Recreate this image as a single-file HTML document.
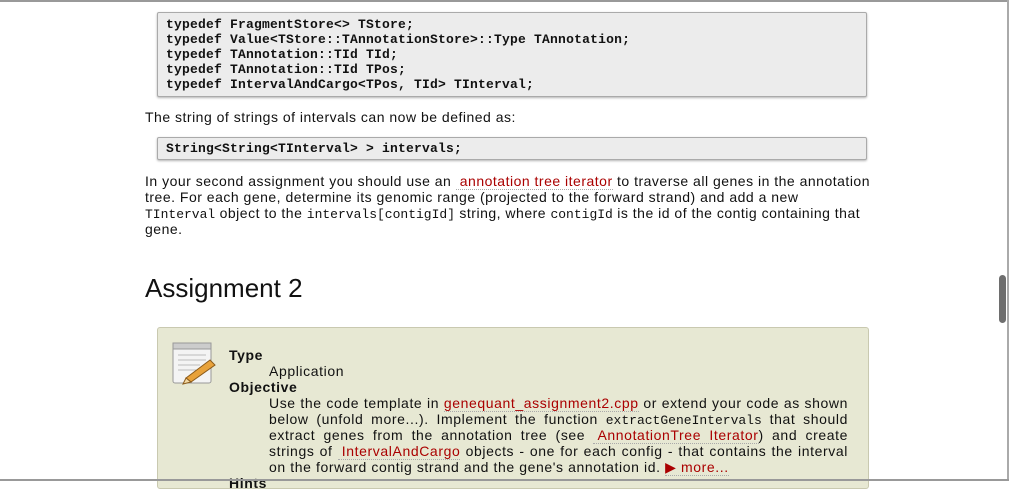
<!DOCTYPE html>
<html><head><style>
body{margin:0;width:1009px;height:481px;overflow:hidden;background:#fff;position:relative;font-family:"Liberation Sans",sans-serif;color:#111;}
.pre{position:absolute;left:157px;width:700px;background:#ececec;border:1px solid #aaa;border-radius:2px;box-shadow:0 1px 2px rgba(0,0,0,.3);padding:4px 0 4px 8px;font:bold 13px/15px "Liberation Mono",monospace;letter-spacing:0.2px;white-space:pre;}
.p{position:absolute;left:145px;width:740px;font-size:14px;letter-spacing:0.5px;line-height:16px;}
a{color:#a00;text-decoration:none;border-bottom:1px dotted #aaa;padding-left:4px}
code{font-family:"Liberation Mono",monospace;font-size:13px;letter-spacing:0;line-height:0}
h2{position:absolute;left:145px;top:273px;margin:0;font-weight:normal;font-size:26px;}
.box{position:absolute;left:157px;top:327px;width:710px;height:160px;background:#e7e8d3;border:1px solid #c9c9b0;border-radius:3px;}
.t{position:absolute;font-size:14px;letter-spacing:0.6px;line-height:16px}
</style></head><body>
<div style="position:absolute;left:0;top:0;width:1009px;height:2px;background:#999"></div>
<div style="position:absolute;right:0;top:0;width:2px;height:481px;background:#aaa"></div>
<div class="pre" style="top:12px">typedef FragmentStore&lt;&gt; TStore;
typedef Value&lt;TStore::TAnnotationStore&gt;::Type TAnnotation;
typedef TAnnotation::TId TId;
typedef TAnnotation::TId TPos;
typedef IntervalAndCargo&lt;TPos, TId&gt; TInterval;</div>
<div class="p" style="top:109px">The string of strings of intervals can now be defined as:</div>
<div class="pre" style="top:137px;padding:3px 0 3px 8px">String&lt;String&lt;TInterval&gt; &gt; intervals;</div>
<div class="p" style="top:173px">In your second assignment you should use an <a>annotation tree iterator</a> to traverse all genes in the annotation tree. For each gene, determine its genomic range (projected to the forward strand) and add a new<br><code>TInterval</code> object to the <code>intervals[contigId]</code> string, where <code>contigId</code> is the id of the contig containing that gene.</div>
<h2>Assignment 2</h2>
<div class="box">
<svg style="position:absolute;left:12px;top:12px" width="48" height="46" viewBox="0 0 48 46">
<rect x="3" y="3" width="38" height="40" rx="2" fill="#f4f4f4" stroke="#999"/>
<rect x="3" y="3" width="38" height="6" fill="#ccc" stroke="#999"/>
<g stroke="#bbb"><line x1="8" y1="15" x2="36" y2="15"/><line x1="8" y1="20" x2="36" y2="20"/><line x1="8" y1="25" x2="30" y2="25"/><line x1="8" y1="30" x2="26" y2="30"/></g>
<path d="M16 38 L40 20 L45 25 L21 42 Z" fill="#e8a23a" stroke="#8a5a1a"/>
<path d="M16 38 L13 44 L21 42 Z" fill="#f3d9a4" stroke="#8a5a1a"/>
</svg>
<div class="t" style="left:71px;top:19px;font-weight:bold">Type</div>
<div class="t" style="left:111px;top:35px">Application</div>
<div class="t" style="left:71px;top:51px;font-weight:bold">Objective</div>
<div class="t" style="left:111px;top:67px;width:579px;text-align:justify">Use the code template in <a style="padding:0">genequant_assignment2.cpp</a> or extend your code as shown below (unfold more...). Implement the function <code>extractGeneIntervals</code> that should extract genes from the annotation tree (see <a>AnnotationTree Iterator</a>) and create strings of <a>IntervalAndCargo</a> objects - one for each config - that contains the interval on the forward contig strand and the gene's annotation id. <a style="padding:0">&#9654; more...</a></div>
<div class="t" style="left:71px;top:147px;font-weight:bold">Hints</div>
</div>
<div style="position:absolute;left:0;top:479px;width:1009px;height:2px;background:#999"></div>
<div style="position:absolute;left:999px;top:275px;width:7px;height:48px;border-radius:4px;background:#6e6e6e"></div>
</body></html>
